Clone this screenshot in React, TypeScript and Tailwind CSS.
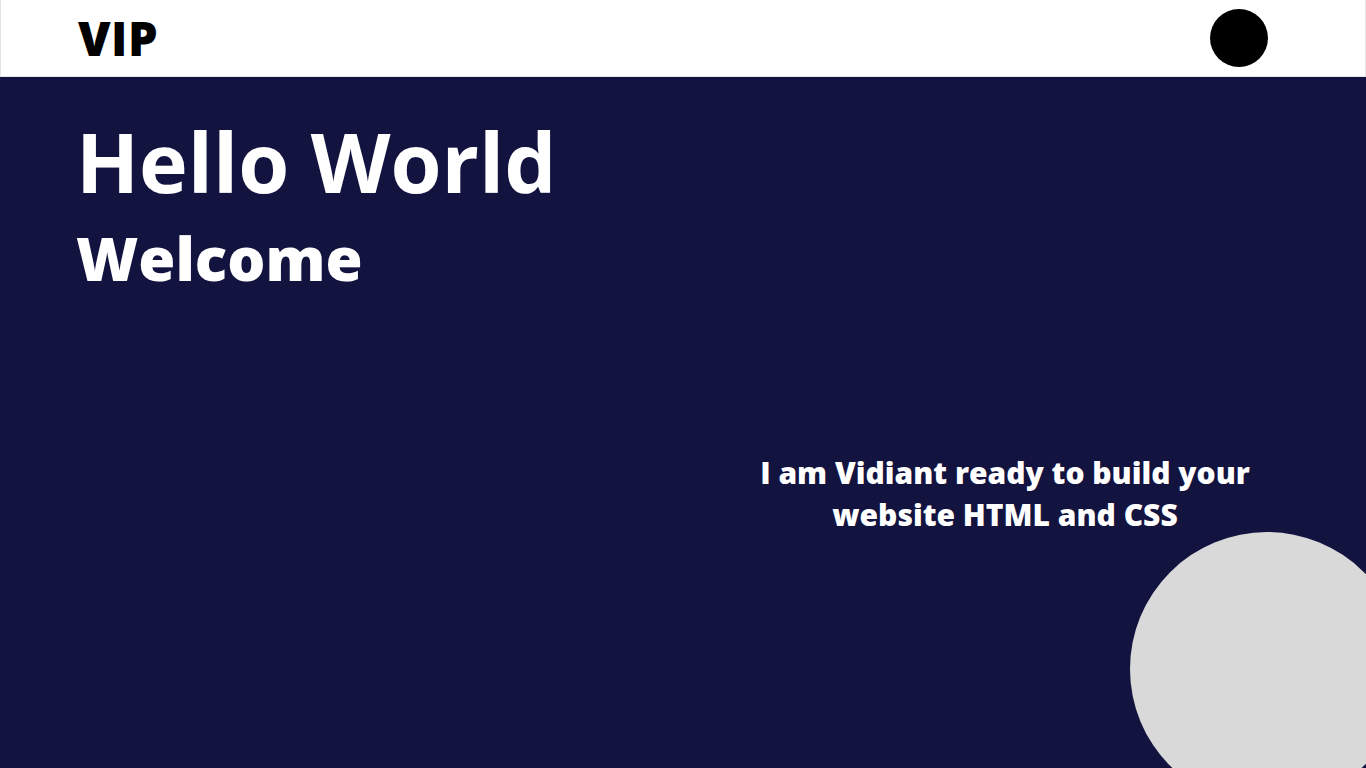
export default function App() {
  return (
    <div className="relative w-full h-[768px] overflow-hidden bg-[#131340]" style={{ fontFamily: '"Open Sans", "Noto Sans", sans-serif' }}>
      <header className="h-[77px] bg-white border-x border-b border-[#e5e5e5] flex items-center justify-between pl-[77px] pr-[97px]">
        <span className="text-[47px] font-extrabold leading-none text-black tracking-[0.5px]">VIP</span>
        <div className="w-[58px] h-[58px] rounded-full bg-black" />
      </header>
      <main className="pl-[76px] text-white">
        <h1 className="mt-[32px] text-[82.5px] font-bold leading-[104px]">Hello World</h1>
        <h2 className="text-[60px] font-extrabold leading-[64px] mt-[13px]">Welcome</h2>
        <div className="flex">
          <p className="ml-[664px] mt-[162px] w-[530px] text-center text-[30px] font-extrabold leading-[42px]">
            I am Vidiant ready to build your website HTML and CSS
          </p>
        </div>
      </main>
      <div className="absolute left-[1130px] top-[532px] w-[274px] h-[274px] rounded-full bg-[#d9d9d9]" />
    </div>
  );
}
